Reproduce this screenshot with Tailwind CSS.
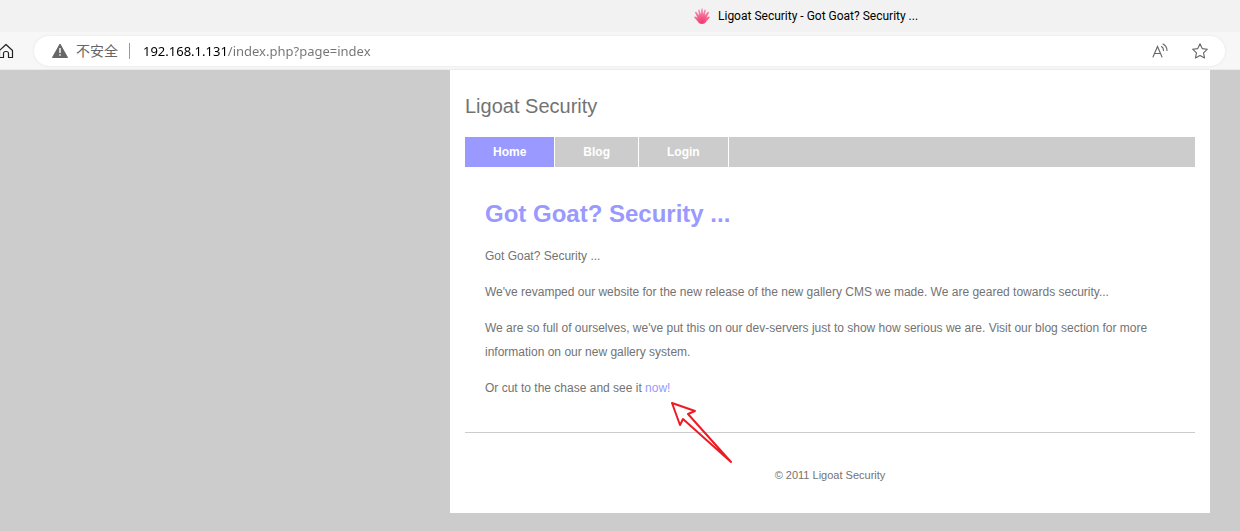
<!DOCTYPE html>
<html lang="en">
<head>
<meta charset="utf-8">
<title>Ligoat Security - Got Goat? Security ...</title>
<script src="https://cdn.jsdelivr.net/npm/@tailwindcss/browser@4"></script>
</head>
<body class="min-h-screen bg-[#cccccc] font-['Liberation_Sans',Arial,sans-serif] text-xs text-[#737373]">
<div class="font-['Open_Sans','Noto_Sans_CJK_SC',sans-serif]">
  <div class="flex h-8 items-center gap-2 bg-[#f2f2f2] pl-[694px] text-black">
    <svg class="size-4 shrink-0" viewBox="0 0 16 16" aria-hidden="true">
      <defs><radialGradient id="petal" cx=".5" cy=".9" r=".9"><stop offset="0" stop-color="#f3386c"/><stop offset="1" stop-color="#f996b8"/></radialGradient></defs>
      <path fill="url(#petal)" d="M8 16C5.500 16 4.500 14.500 3.500 13.200L.2 9.500Q0 8.300 1.300 8.500L3.500 9.800 1 4.800Q.8 3.300 2.300 3.800L5.200 7.500 4.200 2.200Q4.500 .8 5.600 1.800L7 6.500 7.300 1Q8 -.6 8.700 1L9 6.500 10.400 1.800Q11.500 .8 11.800 2.200L10.800 7.500 13.700 3.800Q15.200 3.300 15 4.800L12.500 9.800 14.700 8.500Q16 8.300 15.800 9.500L12.500 13.200C11.500 14.500 10.500 16 8 16Z"/>
    </svg>
    <span class="font-['Roboto',sans-serif] text-xs whitespace-nowrap">Ligoat Security - Got Goat? Security ...</span>
  </div>
  <div class="flex h-[38px] items-center border-b border-[#ececec] bg-[#f7f7f7] pr-[15px]">
    <button aria-label="Home" class="w-[34px] shrink-0">
      <svg class="-ml-0.5 size-4" viewBox="0 0 16 16" fill="none" stroke="#222" stroke-width="1.2" stroke-linejoin="round" aria-hidden="true"><path d="M1.500 7.500 8 1.500l6.500 6v7h-4v-4a2 2 0 0 0-2-2h-1a2 2 0 0 0-2 2v4h-4Z"/></svg>
    </button>
    <div class="flex h-[30px] flex-1 items-center rounded-full bg-white pr-4 pl-[18px] shadow-[0_0_3px_#e4e4e4]">
      <svg class="size-4 shrink-0" viewBox="0 0 16 16" aria-hidden="true"><path fill="#666" stroke="#666" stroke-linejoin="round" d="M8 1 15.500 14.500H.5Z"/><path stroke="#fff" stroke-width="1.400" d="M8 5v5M8 11.300v1.500"/></svg>
      <span class="ml-2 text-sm whitespace-nowrap text-[#666]">不安全</span>
      <span class="mx-[11px] h-4 w-px bg-[#999]"></span>
      <input aria-label="Address" value="192.168.1.131/index.php?page=index" class="ml-0.5 h-6 min-w-0 flex-1 bg-linear-[90deg,#000_85px,#737373_85px] bg-clip-text font-['Noto_Sans',sans-serif] text-[13px] text-transparent outline-none">
      <button aria-label="Read aloud" class="mr-6">
        <svg class="size-4" viewBox="0 0 16 16" fill="none" stroke="#666" stroke-width="1.100" stroke-linecap="round" aria-hidden="true"><path d="M1 14 5.500 3.500 10 14M2.500 10.500h6M9.500 3.500q2 1.300 2 4M11 1q4 2.300 4 6.500"/></svg>
      </button>
      <button aria-label="Add to favorites" class="mr-px">
        <svg class="size-4" viewBox="0 0 16 16" fill="none" stroke="#666" stroke-width="1.100" stroke-linejoin="round" aria-hidden="true"><path d="M8 .8 10.200 5.600 15.400 6.200 11.500 9.800 12.600 15 8 12.400 3.400 15 4.500 9.800.6 6.200 5.800 5.600Z"/></svg>
      </button>
    </div>
  </div>
</div>

<div class="mr-[30px] ml-auto max-w-[760px] bg-white px-[15px] pt-6 pb-[26px]">
  <header class="text-xl leading-6">Ligoat Security</header>
  <nav class="mt-[19px] flex h-[30px] bg-[#cccccc] font-bold text-white">
    <a href="#" class="border-r border-white bg-[#9999ff] px-7 leading-[30px]">Home</a>
    <a href="#" class="border-r border-white px-7 leading-[30px]">Blog</a>
    <a href="#" class="border-r border-white px-7 leading-[30px]">Login</a>
  </nav>
  <main class="relative space-y-3 px-5 pt-8 pb-5 leading-6">
    <h1 class="mb-[15px] text-2xl leading-[30px] font-bold text-[#9999ff]">Got Goat? Security ...</h1>
    <p>Got Goat? Security ...</p>
    <p>We've revamped our website for the new release of the new gallery CMS we made. We are geared towards security...</p>
    <p>We are so full of ourselves, we've put this on our dev-servers just to show how serious we are. Visit our blog section for more information on our new gallery system.</p>
    <p>Or cut to the chase and see it <a href="#" class="text-[#9999ff]">now!</a></p>
    <svg class="absolute top-[233px] left-[205px] h-[66px] w-[66px]" viewBox="0 0 66 66" fill="none" stroke="#ed1c24" stroke-width="2" stroke-linejoin="round" aria-hidden="true"><path d="M2 3 25 11 18 14 61 62 13 19 10 25Z"/></svg>
  </main>
  <footer class="border-t border-[#cccccc] pt-[30px] text-center text-[11px] leading-6">© 2011 Ligoat Security</footer>
</div>
</body>
</html>
